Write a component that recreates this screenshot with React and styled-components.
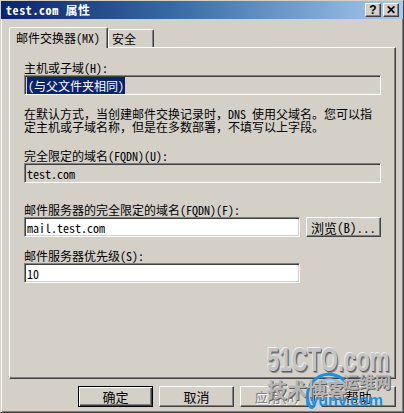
import React from 'react';
import styled, { createGlobalStyle } from 'styled-components';

const GlobalStyle = createGlobalStyle`
  html, body {
    margin: 0;
    padding: 0;
    background: #d4d0c8;
  }
  * {
    box-sizing: border-box;
  }
`;

const uiFont = `"Noto Sans Mono CJK SC", "Noto Sans CJK SC", "DejaVu Sans Mono", monospace`;

const Window = styled.div`
  position: relative;
  width: 404px;
  height: 413px;
  background: #d4d0c8;
  border: 1px solid;
  border-color: #d4d0c8 #404040 #404040 #d4d0c8;
  box-shadow: inset 1px 1px #fff, inset -1px -1px #808080;
  font-family: ${uiFont};
  font-size: 12px;
  color: #000;
  overflow: hidden;
`;

const TitleBar = styled.div`
  height: 18px;
  display: flex;
  align-items: center;
  justify-content: space-between;
  padding: 0 4px 0 5px;
  background: linear-gradient(to right, #0a246a 0%, #3a6ea5 45%, #a6caf0 100%);
`;

const Title = styled.span`
  color: #fff;
  font-weight: bold;
  font-size: 12px;
  line-height: 18px;
  letter-spacing: 0.6px;
`;

const TitleButtons = styled.div`
  display: flex;
  gap: 2px;
`;

const CaptionButton = styled.div`
  width: 16px;
  height: 14px;
  display: flex;
  align-items: center;
  justify-content: center;
  background: #d4d0c8;
  border: 1px solid;
  border-color: #fff #404040 #404040 #fff;
  box-shadow: inset -1px -1px #808080;
  font-family: "Liberation Sans", Arial, sans-serif;
  font-weight: bold;
  font-size: 12px;
  line-height: 1;
  color: #000;
`;

const Body = styled.div`
  padding: 8px 7px 0 8px;
`;

const TabStrip = styled.div`
  display: flex;
  align-items: flex-end;
  height: 20px;
  position: relative;
  z-index: 1;
`;

const Tab = styled.div`
  height: ${(p) => (p.$active ? '21px' : '18px')};
  margin-bottom: ${(p) => (p.$active ? '-1px' : '0')};
  width: ${(p) => p.$width}px;
  padding: ${(p) => (p.$active ? '3px 0 0 6px' : '2px 0 0 3px')};
  background: #d4d0c8;
  border: 1px solid;
  border-bottom: none;
  border-color: #fff #404040 transparent #fff;
  box-shadow: inset -1px 0 #808080;
  border-radius: 2px 2px 0 0;
  line-height: 14px;
  white-space: nowrap;
`;

const Panel = styled.div`
  height: 332px;
  border: 1px solid;
  border-color: #fff #404040 #404040 #fff;
  box-shadow: inset -1px -1px #808080;
  padding: 13px 14px 0 14px;
  display: flex;
  flex-direction: column;
`;

const Label = styled.div`
  line-height: 13px;
  margin-top: ${(p) => p.$gap || 0}px;
  margin-bottom: 1px;
  white-space: nowrap;
`;

const Field = styled.div`
  height: 20px;
  width: ${(p) => (p.$narrow ? '276px' : '100%')};
  background: ${(p) => (p.$disabled ? '#d4d0c8' : '#fff')};
  border: 1px solid;
  border-color: #808080 #fff #fff #808080;
  box-shadow: inset 1px 1px #404040, inset -1px -1px #d4d0c8;
  padding: 2px 3px 0 2px;
  line-height: 15px;
  white-space: nowrap;
`;

const Selected = styled.span`
  background: #0a246a;
  color: #fff;
  padding: 0 1px;
`;

const Note = styled.p`
  margin: 12px 0 0 0;
  line-height: 13px;
  white-space: nowrap;
`;

const FieldRow = styled.div`
  display: flex;
  gap: 6px;
  align-items: center;
`;

const Button = styled.div`
  width: 75px;
  height: ${(p) => (p.$small ? '20px' : '21px')};
  display: flex;
  align-items: center;
  justify-content: center;
  background: #d4d0c8;
  border: 1px solid;
  border-color: ${(p) => (p.$default ? '#000' : '#fff #404040 #404040 #fff')};
  box-shadow: ${(p) =>
    p.$default
      ? 'inset 1px 1px #fff, inset -1px -1px #404040, inset -2px -2px #808080'
      : 'inset -1px -1px #808080'};
  color: ${(p) => (p.$disabled ? '#808080' : '#000')};
  text-shadow: ${(p) => (p.$disabled ? '1px 1px #fff' : 'none')};
  font-size: ${(p) => (p.$default || p.$big ? '13px' : '12px')};
  white-space: nowrap;
`;

const ButtonRow = styled.div`
  display: flex;
  justify-content: flex-end;
  gap: 6px;
  margin-top: 7px;
`;

/* 51CTO / iyunv watermark stamped over the bottom-right corner */
const Watermark = styled.div`
  position: absolute;
  left: 262px;
  top: 342px;
  width: 140px;
  height: 70px;
  pointer-events: none;
`;

const MarkBig = styled.div`
  position: absolute;
  left: 4px;
  top: 0;
  font-family: "Liberation Sans", Arial, sans-serif;
  font-weight: bold;
  font-size: 33px;
  line-height: 34px;
  white-space: nowrap;
  transform: scaleX(0.67);
  transform-origin: left top;
  color: #c4c4c4;
  text-shadow: -1px -1px #efefef, 1px 1px #5e5e5e, 2px 2px #8a8a8a;
`;

const MarkCn = styled.div`
  position: absolute;
  left: ${(p) => p.$x}px;
  top: ${(p) => p.$y}px;
  font-family: "Noto Sans CJK SC", sans-serif;
  font-weight: bold;
  font-size: ${(p) => p.$size}px;
  line-height: 1;
  white-space: nowrap;
  color: #b4b4b4;
  text-shadow: 1px 1px #5e5e5e;
`;

const MarkBlue = styled.div`
  position: absolute;
  left: 42px;
  top: 50px;
  font-family: "Liberation Sans", Arial, sans-serif;
  font-weight: bold;
  font-size: 16px;
  line-height: 16px;
  color: #1d8fe0;
`;

const Arc = styled.svg`
  position: absolute;
  left: 40px;
  top: 21px;
`;

export default function App() {
  return (
    <>
      <GlobalStyle />
      <Window>
        <TitleBar>
          <Title>test.com 属性</Title>
          <TitleButtons>
            <CaptionButton>?</CaptionButton>
            <CaptionButton>✕</CaptionButton>
          </TitleButtons>
        </TitleBar>
        <Body>
          <TabStrip>
            <Tab $active $width={99}>邮件交换器(MX)</Tab>
            <Tab $width={46}>安全</Tab>
          </TabStrip>
          <Panel>
            <Label>主机或子域(H):</Label>
            <Field $disabled>
              <Selected>(与父文件夹相同)</Selected>
            </Field>
            <Note>
              在默认方式，当创建邮件交换记录时，DNS 使用父域名。您可以指
              <br />
              定主机或子域名称，但是在多数部署，不填写以上字段。
            </Note>
            <Label $gap={16}>完全限定的域名(FQDN)(U):</Label>
            <Field $disabled>test.com</Field>
            <Label $gap={20}>邮件服务器的完全限定的域名(FQDN)(F):</Label>
            <FieldRow>
              <Field $narrow>mail.test.com</Field>
              <Button $small $big>浏览(B)...</Button>
            </FieldRow>
            <Label $gap={12}>邮件服务器优先级(S):</Label>
            <Field $narrow>10</Field>
          </Panel>
          <ButtonRow>
            <Button $default>确定</Button>
            <Button $big>取消</Button>
            <Button $big $disabled>应用(A)</Button>
            <Button $big>帮助</Button>
          </ButtonRow>
        </Body>
        <Watermark>
          <MarkBig>51CTO.com</MarkBig>
          <Arc width="50" height="48" viewBox="0 0 50 48">
            <path d="M8 44 A20 20 0 1 1 44 20" fill="none" stroke="#1d8fe0" strokeWidth="3" />
            <path d="M13 42 A15 15 0 1 1 40 22" fill="none" stroke="#7cc4f2" strokeWidth="2" />
          </Arc>
          <MarkCn $x={4} $y={37} $size={20}>技术博客</MarkCn>
          <MarkCn $x={80} $y={30} $size={16}>运维网</MarkCn>
          <MarkBlue>iyunv.com</MarkBlue>
        </Watermark>
      </Window>
    </>
  );
}
